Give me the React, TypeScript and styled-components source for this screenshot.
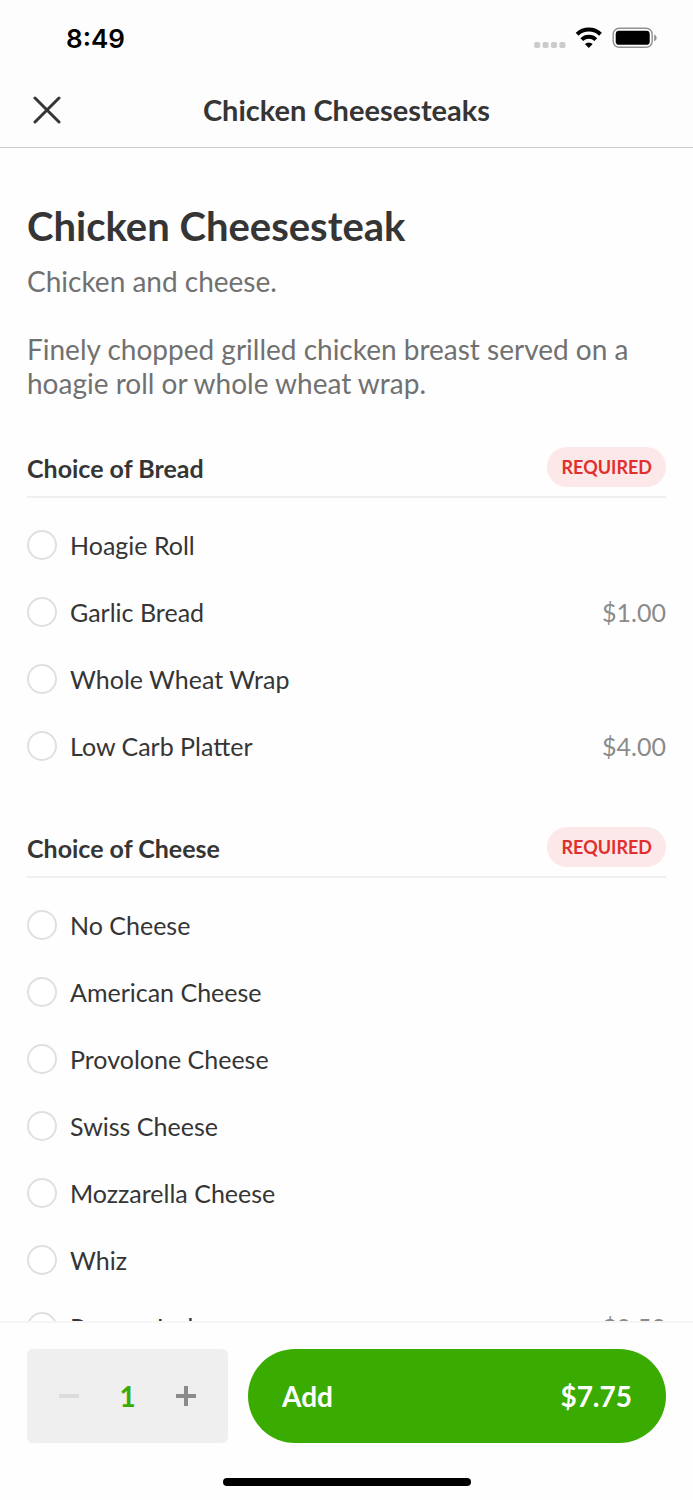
import React, { useState } from "react";
import styled, { createGlobalStyle } from "styled-components";

const GlobalStyle = createGlobalStyle`
  *, *::before, *::after { box-sizing: border-box; }
  body {
    margin: 0;
    background: #fefefe;
    color: #353535;
    font-family: Lato, "Open Sans", sans-serif;
  }
  button, input { font: inherit; }
`;

const Screen = styled.div`
  display: flex;
  flex-direction: column;
  height: 100vh;
  overflow: hidden;
`;

const Header = styled.header`
  flex: none;
  background: #fdfdfd;
  border-bottom: 1px solid #cfcfcf;
`;

const StatusBar = styled.div`
  display: flex;
  align-items: center;
  justify-content: space-between;
  height: 74px;
  padding: 2px 36px 0 66px;
`;

const Clock = styled.time`
  padding-top: 2px;
  font-family: Inter, sans-serif;
  font-size: 26px;
  line-height: 32px;
  font-weight: 600;
  color: #000;
`;

const StatusIcons = styled.svg`
  display: block;
  width: 124px;
  height: 22px;
`;

const NavBar = styled.div`
  display: grid;
  grid-template-columns: 48px 1fr 48px;
  align-items: center;
  height: 73px;
  padding: 0 23px 2px;
`;

const CloseButton = styled.button`
  display: flex;
  align-items: center;
  justify-content: center;
  width: 48px;
  height: 48px;
  padding: 0;
  border: 0;
  background: none;
  color: #353535;
`;

const NavTitle = styled.div`
  font-size: 29px;
  line-height: 34px;
  font-weight: 700;
  text-align: center;
`;

const Content = styled.main`
  flex: 1;
  min-height: 0;
  overflow-y: auto;
  scrollbar-width: none;
  padding: 53px 27px 0;
`;

const Title = styled.h1`
  margin: 0 0 13px;
  font-size: 40px;
  line-height: 50px;
  font-weight: 700;
`;

const Description = styled.p`
  margin: 0 0 34px;
  font-size: 28px;
  line-height: 34px;
  color: #717171;
`;

const Group = styled.section`
  margin-top: 47px;
`;

const GroupHeader = styled.div`
  display: flex;
  align-items: center;
  justify-content: space-between;
  padding-bottom: 9px;
  border-bottom: 2px solid #efefef;
`;

const GroupTitle = styled.h2`
  margin: 0;
  padding-top: 2px;
  font-size: 25px;
  line-height: 30px;
  font-weight: 700;
`;

const Badge = styled.span`
  padding: 0 14px;
  border-radius: 20px;
  background: #fde8e9;
  color: #e0302d;
  font-size: 18px;
  line-height: 40px;
  font-weight: 700;
`;

const Options = styled.div`
  padding: 13px 0 1px;
`;

const OptionRow = styled.label`
  display: flex;
  align-items: center;
  gap: 13px;
  height: 67px;
  font-size: 25px;
  line-height: 30px;
`;

const Radio = styled.input`
  appearance: none;
  flex: none;
  width: 30px;
  height: 30px;
  margin: 0;
  border: 2px solid #e0e0e0;
  border-radius: 50%;
  background: #fff;

  &:checked {
    border: 9px solid #3aab00;
  }
`;

const OptionName = styled.span`
  flex: 1;
`;

const OptionPrice = styled.span`
  color: #8b8b8b;
`;

const Footer = styled.footer`
  flex: none;
  padding: 26px 27px 14px;
  border-top: 2px solid #f6f6f6;
  background: #fefefe;
`;

const Actions = styled.div`
  display: flex;
  gap: 20px;
  height: 94px;
`;

const Stepper = styled.div`
  display: grid;
  grid-template-columns: 84px 1fr 84px;
  align-items: center;
  flex: none;
  width: 201px;
  border-radius: 6px;
  background: #efefef;
`;

const StepButton = styled.button`
  display: flex;
  align-items: center;
  justify-content: center;
  height: 100%;
  padding: 0;
  border: 0;
  background: none;
  color: #8b8b8b;

  &:disabled {
    color: #dcdcdc;
  }
`;

const Quantity = styled.output`
  font-size: 28px;
  line-height: 34px;
  font-weight: 700;
  text-align: center;
  color: #3aab00;
`;

const AddButton = styled.button`
  display: flex;
  align-items: center;
  justify-content: space-between;
  flex: 1;
  padding: 0 34px;
  border: 0;
  border-radius: 47px;
  background: #3aab00;
  color: #fff;
  font-size: 28px;
  line-height: 34px;
  font-weight: 700;
`;

const HomeIndicator = styled.div`
  width: 248px;
  height: 8px;
  margin: 35px auto 0;
  border-radius: 4px;
  background: #000;
`;

type Option = { name: string; price?: string };
type OptionGroup = { id: string; title: string; options: Option[] };

const groups: OptionGroup[] = [
  {
    id: "bread",
    title: "Choice of Bread",
    options: [
      { name: "Hoagie Roll" },
      { name: "Garlic Bread", price: "$1.00" },
      { name: "Whole Wheat Wrap" },
      { name: "Low Carb Platter", price: "$4.00" },
    ],
  },
  {
    id: "cheese",
    title: "Choice of Cheese",
    options: [
      { name: "No Cheese" },
      { name: "American Cheese" },
      { name: "Provolone Cheese" },
      { name: "Swiss Cheese" },
      { name: "Mozzarella Cheese" },
      { name: "Whiz" },
      { name: "Pepper Jack", price: "$0.50" },
    ],
  },
];

function ChoiceGroup({ group }: { group: OptionGroup }) {
  const titleId = `${group.id}-title`;
  return (
    <Group role="radiogroup" aria-labelledby={titleId}>
      <GroupHeader>
        <GroupTitle id={titleId}>{group.title}</GroupTitle>
        <Badge>REQUIRED</Badge>
      </GroupHeader>
      <Options>
        {group.options.map((option) => (
          <OptionRow key={option.name}>
            <Radio type="radio" name={group.id} value={option.name} />
            <OptionName>{option.name}</OptionName>
            {option.price && <OptionPrice>{option.price}</OptionPrice>}
          </OptionRow>
        ))}
      </Options>
    </Group>
  );
}

export default function App() {
  const [quantity, setQuantity] = useState(1);

  return (
    <>
      <GlobalStyle />
      <Screen>
        <Header>
          <StatusBar>
            <Clock>8:49</Clock>
            <StatusIcons viewBox="0 0 124 22" aria-hidden="true">
              <g fill="#cbcbcb">
                <rect x="1.2" y="15" width="6" height="6" rx="1.8" />
                <rect x="9.6" y="15" width="6" height="6" rx="1.8" />
                <rect x="18" y="15" width="6" height="6" rx="1.8" />
                <rect x="26.4" y="15" width="6" height="6" rx="1.8" />
              </g>
              <g fill="none" stroke="#000" strokeWidth="4">
                <path d="M44.1 7.3a16.8 16.8 0 0 1 23.4 0" />
                <path d="M48.8 12.6a10 10 0 0 1 14 0" />
              </g>
              <path d="M55.8 21l-3.9-4a5.6 5.6 0 0 1 7.8 0z" fill="#000" />
              <rect x="80.2" y="1.3" width="39" height="19" rx="6" fill="none" stroke="#919191" strokeWidth="1.4" />
              <rect x="82.7" y="3.8" width="34" height="14" rx="3.4" fill="#000" />
              <path d="M121.2 7.6c1.5.6 2.4 1.8 2.4 3.3s-.9 2.7-2.4 3.3z" fill="#919191" />
            </StatusIcons>
          </StatusBar>
          <NavBar>
            <CloseButton type="button" aria-label="Close">
              <svg width="28" height="28" viewBox="0 0 28 28" fill="none" stroke="currentColor" strokeWidth="3" strokeLinecap="round" aria-hidden="true">
                <path d="M2 2l24 24M26 2L2 26" />
              </svg>
            </CloseButton>
            <NavTitle>Chicken Cheesesteaks</NavTitle>
          </NavBar>
        </Header>

        <Content>
          <Title>Chicken Cheesesteak</Title>
          <Description>Chicken and cheese.</Description>
          <Description>
            Finely chopped grilled chicken breast served on a hoagie roll or whole wheat wrap.
          </Description>
          {groups.map((group) => (
            <ChoiceGroup key={group.id} group={group} />
          ))}
        </Content>

        <Footer>
          <Actions>
            <Stepper>
              <StepButton
                type="button"
                aria-label="Decrease quantity"
                disabled={quantity === 1}
                onClick={() => setQuantity(quantity - 1)}
              >
                <svg width="20" height="20" viewBox="0 0 20 20" fill="none" stroke="currentColor" strokeWidth="4" aria-hidden="true">
                  <path d="M0 10h20" />
                </svg>
              </StepButton>
              <Quantity>{quantity}</Quantity>
              <StepButton type="button" aria-label="Increase quantity" onClick={() => setQuantity(quantity + 1)}>
                <svg width="20" height="20" viewBox="0 0 20 20" fill="none" stroke="currentColor" strokeWidth="4" aria-hidden="true">
                  <path d="M0 10h20M10 0v20" />
                </svg>
              </StepButton>
            </Stepper>
            <AddButton type="button">
              <span>Add</span>
              <span>${(7.75 * quantity).toFixed(2)}</span>
            </AddButton>
          </Actions>
          <HomeIndicator />
        </Footer>
      </Screen>
    </>
  );
}
